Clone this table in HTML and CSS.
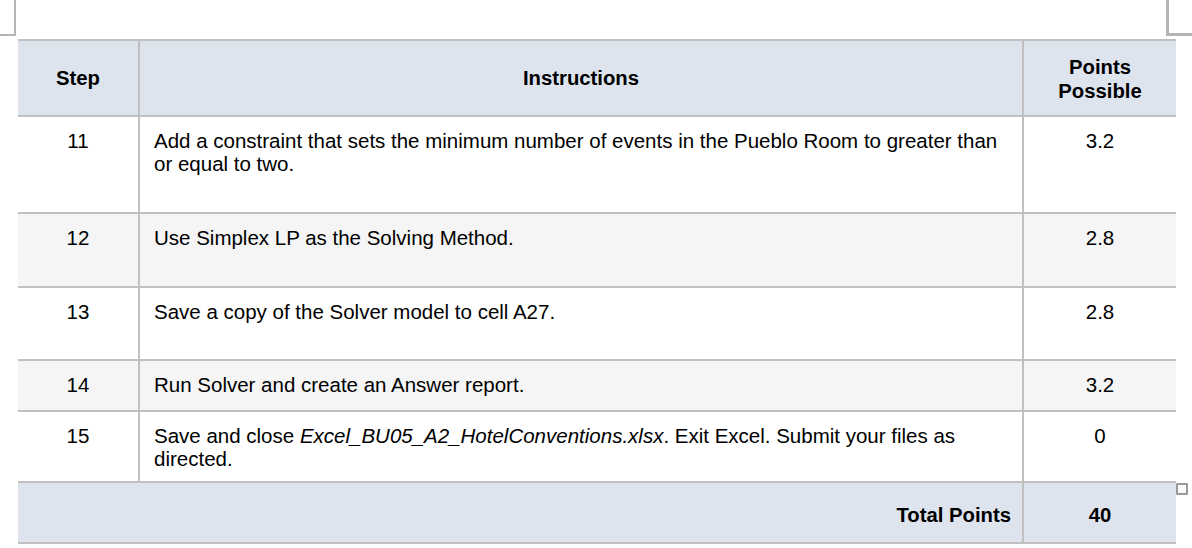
FILE: index.html
```html
<!DOCTYPE html>
<html>
<head>
<meta charset="utf-8">
<link rel="stylesheet" href="styles.css">
</head>
<body>
<div class="frame">
  <div class="corner-left"></div>
  <div class="corner-right"></div>
</div>
<div class="wrap">
<table class="grid">
  <colgroup>
    <col class="c-step">
    <col class="c-inst">
    <col class="c-pts">
  </colgroup>
  <thead>
    <tr class="head">
      <th>Step</th>
      <th>Instructions</th>
      <th>Points<br>Possible</th>
    </tr>
  </thead>
  <tbody>
    <tr class="r11">
      <td class="num">11</td>
      <td class="inst">Add a constraint that sets the minimum number of events in the Pueblo Room to greater than or equal to two.</td>
      <td class="num">3.2</td>
    </tr>
    <tr class="r12 alt">
      <td class="num">12</td>
      <td class="inst">Use Simplex LP as the Solving Method.</td>
      <td class="num">2.8</td>
    </tr>
    <tr class="r13">
      <td class="num">13</td>
      <td class="inst">Save a copy of the Solver model to cell A27.</td>
      <td class="num">2.8</td>
    </tr>
    <tr class="r14 alt">
      <td class="num">14</td>
      <td class="inst">Run Solver and create an Answer report.</td>
      <td class="num">3.2</td>
    </tr>
    <tr class="r15">
      <td class="num">15</td>
      <td class="inst">Save and close <em>Excel_BU05_A2_HotelConventions.xlsx</em>. Exit Excel. Submit your files as directed.</td>
      <td class="num">0</td>
    </tr>
    <tr class="total">
      <td class="total-label" colspan="2">Total Points</td>
      <td class="total-val">40</td>
    </tr>
  </tbody>
</table>
<div class="handle"></div>
</div>
</body>
</html>
```
FILE: styles.css
```css
html, body {
  margin: 0;
  padding: 0;
  background: #ffffff;
}
body {
  font-family: "Liberation Sans", Arial, sans-serif;
  color: #000;
  width: 1192px;
  height: 548px;
  overflow: hidden;
}
.frame {
  display: flex;
  justify-content: space-between;
  height: 36px;
}
.corner-left {
  width: 14px;
  height: 34px;
  border-right: 2px solid #b4b4b4;
  border-bottom: 2px solid #b4b4b4;
}
.corner-right {
  width: 24px;
  height: 33px;
  border-left: 3px solid #b4b4b4;
  border-bottom: 3px solid #b4b4b4;
  margin-right: -1px;
}
.wrap {
  position: relative;
  margin-top: 3px;
  margin-left: 18px;
  width: 1158px;
}
.grid {
  border-collapse: collapse;
  table-layout: fixed;
  width: 1158px;
  font-size: 20.5px;
  line-height: 23px;
}
.c-step { width: 121px; }
.c-inst { width: 884px; }
.c-pts { width: 153px; }
.grid th, .grid td {
  border: 2px solid #c0c0c0;
  vertical-align: top;
  padding: 0;
}
.grid tr > :first-child { border-left: none; }
.grid tr > :last-child { border-right: none; }
.head th {
  background: #dde4ee;
  font-weight: bold;
  font-size: 20.3px;
  height: 72px;
  vertical-align: middle;
  text-align: center;
  line-height: 24px;
}
.head th:last-child { padding-top: 2px; }
.grid td.num {
  text-align: center;
  padding-top: 12px;
}
.grid td.inst {
  padding: 12px 20px 0 14px;
}
.r11 td { height: 83px; }
.r12 td { height: 60px; }
.r13 td { height: 59px; }
.r14 td { height: 37px; }
.r15 td { height: 57px; }
.alt td { background: #f5f5f5; }
.total td {
  background: #dde4ee;
  font-weight: bold;
  font-size: 20.3px;
  height: 53px;
  padding-top: 6px;
  vertical-align: middle;
}
.grid td.total-label {
  text-align: right;
  padding-right: 11px;
}
.total-val { text-align: center; }
.handle {
  position: absolute;
  left: 1158px;
  top: 444px;
  width: 8px;
  height: 8px;
  border: 2px solid #9a9a9a;
  background: #fafafa;
  border-radius: 1px;
}
```
